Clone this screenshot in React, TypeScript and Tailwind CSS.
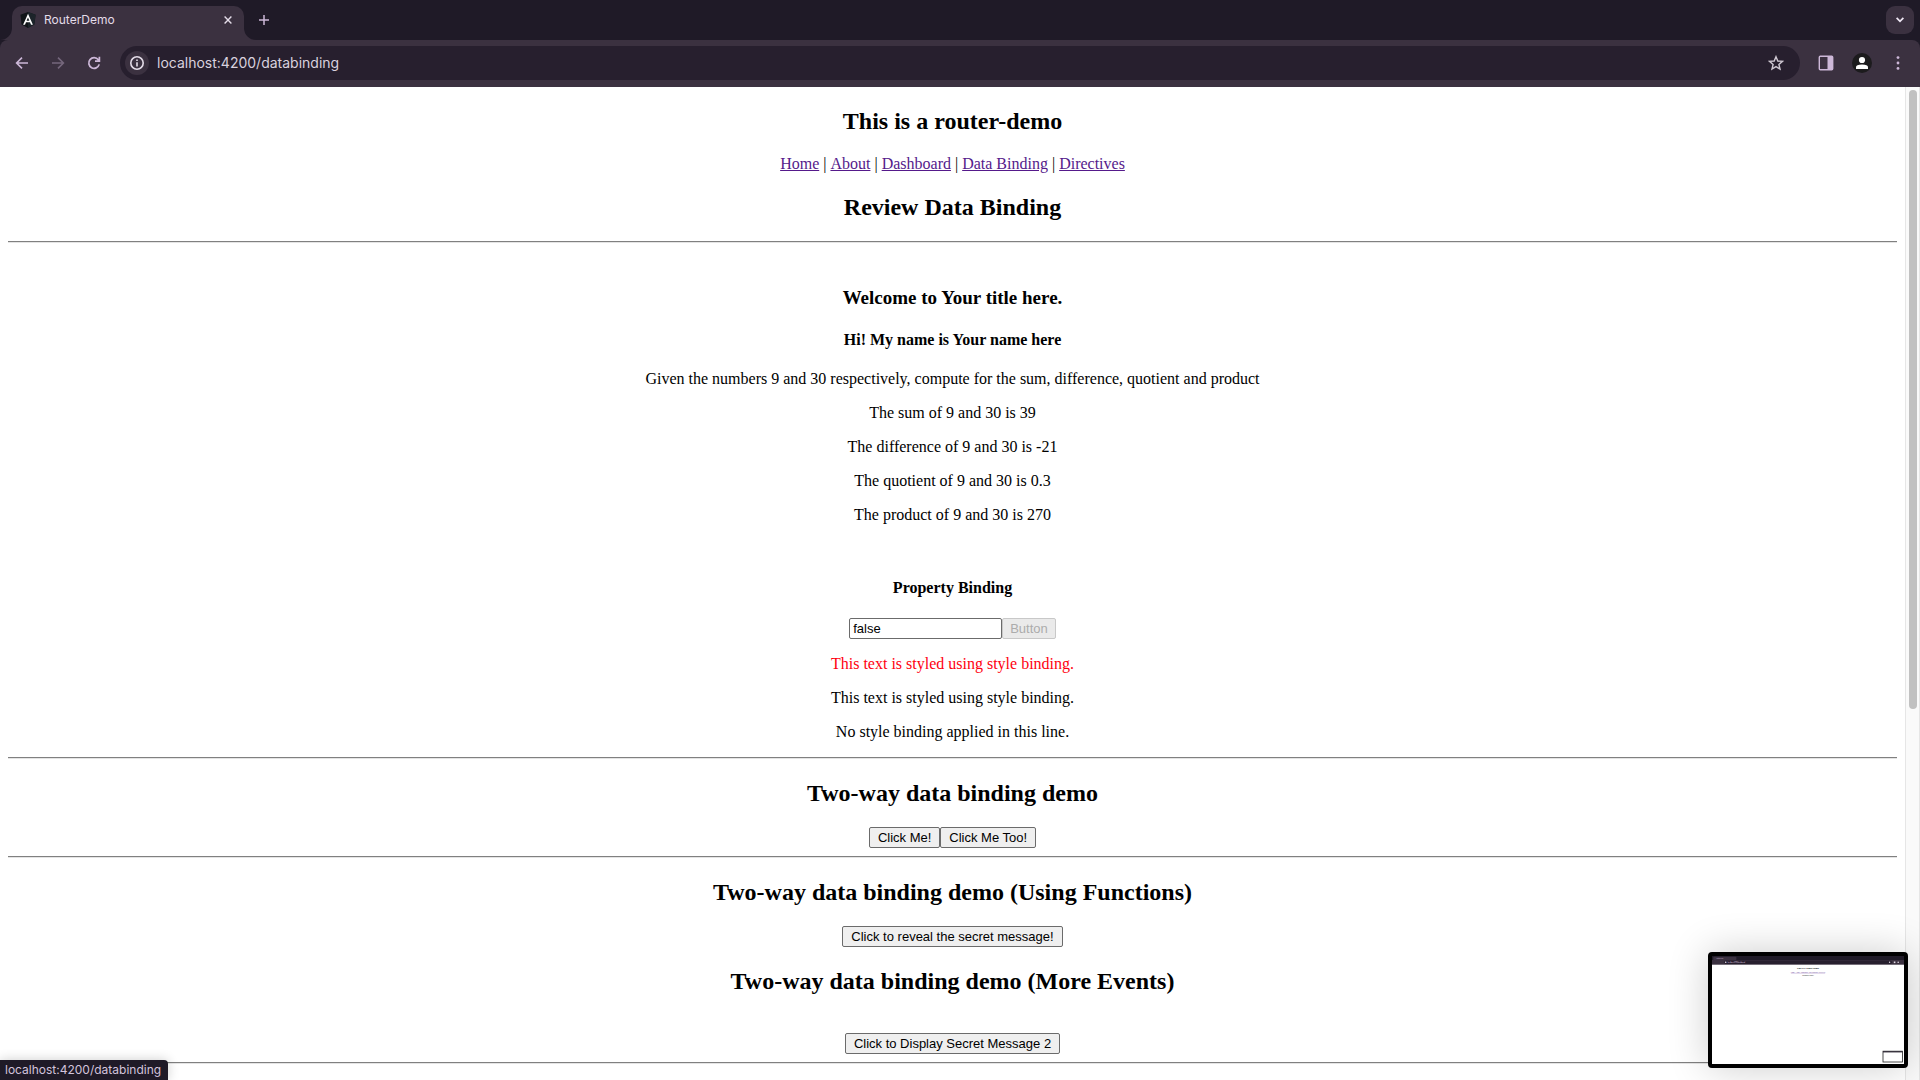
import type { ReactNode } from "react";

const tabFoot = "M0 12 A12 12 0 0 0 12 0 V12 Z";

function AngularMark() {
  return (
    <svg viewBox="0 0 16 16" className="size-4 shrink-0" aria-hidden="true">
      <path d="M8 0 15.6 2.7 14.4 12.6 8 16 1.6 12.6 .4 2.7Z" fill="#101418" />
      <path d="M8 0 15.6 2.7 14.4 12.6 8 16Z" fill="#1c242a" />
      <path d="M8 1.8 3.1 12.8h1.9l1-2.5h4l1 2.5h1.9L8 1.8Zm1.4 7H6.6L8 5.4Z" fill="#fff" />
    </svg>
  );
}

function TabStrip() {
  return (
    <div className="flex h-10 shrink-0 items-end bg-[#1f1a27]">
      <svg viewBox="0 0 12 12" className="size-3 shrink-0" aria-hidden="true">
        <path d={tabFoot} fill="#3b3140" />
      </svg>
      <div className="flex h-[34px] w-[232px] items-center gap-2 rounded-t-[10px] bg-[#3b3140] pr-2 pb-1.5 pl-2">
        <AngularMark />
        <span className="grow text-xs text-[#e4dce8]">RouterDemo</span>
        <button aria-label="Close tab" className="flex size-4 items-center justify-center">
          <svg viewBox="0 0 8 8" className="size-2" fill="none" stroke="#e4dce8" strokeWidth="1.4" aria-hidden="true">
            <path d="M.6 .6 7.4 7.4M7.4 .6 .6 7.4" />
          </svg>
        </button>
      </div>
      <svg viewBox="0 0 12 12" className="size-3 shrink-0 -scale-x-100" aria-hidden="true">
        <path d={tabFoot} fill="#3b3140" />
      </svg>
      <button aria-label="New tab" className="mb-3 flex size-4 items-center justify-center">
        <svg viewBox="0 0 10 10" className="size-2.5" fill="none" stroke="#cdb8d8" strokeWidth="1.5" aria-hidden="true">
          <path d="M5 0V10M0 5H10" />
        </svg>
      </button>
      <button aria-label="Search tabs" className="mr-1.5 mb-1.5 ml-auto flex size-7 items-center justify-center rounded-[9px] bg-[#3b3140]">
        <svg viewBox="0 0 8 6" className="h-1.5 w-2" fill="none" stroke="#f0e8f4" strokeWidth="1.8" aria-hidden="true">
          <path d="M.6 .9 4 4.3 7.4 .9" />
        </svg>
      </button>
    </div>
  );
}

function Toolbar() {
  return (
    <div className="shrink-0 bg-[#1f1a27]">
      <div className="flex h-[47px] items-center rounded-t-lg bg-[#3b3140] pr-3.5 pb-px pl-3.5">
        <div className="flex items-center gap-5">
          <button aria-label="Back" className="size-4">
            <svg viewBox="0 0 16 16" fill="none" stroke="#cdb8d8" strokeWidth="1.6" aria-hidden="true">
              <path d="M14 8H3M8 2.6 2.6 8 8 13.4" />
            </svg>
          </button>
          <button aria-label="Forward" className="size-4">
            <svg viewBox="0 0 16 16" fill="none" stroke="#75677c" strokeWidth="1.6" aria-hidden="true">
              <path d="M2 8H13M8 2.6 13.4 8 8 13.4" />
            </svg>
          </button>
          <button aria-label="Reload" className="size-4">
            <svg viewBox="0 0 16 16" fill="none" stroke="#cdb8d8" strokeWidth="1.7" aria-hidden="true">
              <path d="M13.2 9.4A5.3 5.3 0 1 1 12.3 4.8L13.4 6.2M13.4 1.8V6.2H9" />
            </svg>
          </button>
        </div>
        <div className="ml-[18px] flex h-[34px] grow items-center rounded-full bg-[#271f2e] pr-4 pl-[5px]">
          <button aria-label="View site information" className="flex size-6 items-center justify-center rounded-full bg-[#3b3140]">
            <svg viewBox="0 0 16 16" className="size-4" fill="none" stroke="#e4dce8" strokeWidth="1.6" aria-hidden="true">
              <circle cx="8" cy="8" r="6.2" />
              <path d="M8 7.2V11.4M8 4.4V6" />
            </svg>
          </button>
          <input
            aria-label="Address"
            defaultValue="localhost:4200/databinding"
            className="ml-2 min-w-0 grow bg-transparent text-sm text-[#d9d1de] outline-none"
          />
          <button aria-label="Bookmark this tab" className="size-4">
            <svg viewBox="0 0 16 16" fill="none" stroke="#cfc8d2" strokeWidth="1.4" aria-hidden="true">
              <path d="M8 1.7 9.8 6 14.5 6.4 10.9 9.5 12 14.1 8 11.6 4 14.1 5.1 9.5 1.5 6.4 6.2 6Z" />
            </svg>
          </button>
        </div>
        <button aria-label="Side panel" className="ml-[18px] size-4">
          <svg viewBox="0 0 16 16" aria-hidden="true">
            <rect x="1.3" y="1.3" width="13.4" height="13.4" rx="1" fill="none" stroke="#cdb8d8" strokeWidth="1.4" />
            <path d="M9.5 1H15V15H9.5Z" fill="#cdb8d8" />
          </svg>
        </button>
        <button aria-label="Profile" className="ml-[18px] flex size-5 items-center justify-center rounded-full bg-[#1c1b1d]">
          <svg viewBox="0 0 14 14" className="size-3.5" fill="#fff" aria-hidden="true">
            <circle cx="7" cy="4" r="3.1" />
            <path d="M1 13V11.2Q1 8.4 7 8.4T13 11.2V13Z" />
          </svg>
        </button>
        <button aria-label="Menu" className="ml-[18px] size-4">
          <svg viewBox="0 0 16 16" fill="#cdb8d8" aria-hidden="true">
            <circle cx="8" cy="2.6" r="1.4" />
            <circle cx="8" cy="8" r="1.4" />
            <circle cx="8" cy="13.4" r="1.4" />
          </svg>
        </button>
      </div>
    </div>
  );
}

function H2({ children }: { children: ReactNode }) {
  return <h2 className="my-5 text-2xl leading-7 font-bold">{children}</h2>;
}

function Rule() {
  return <hr className="h-0.5 border-x-0 border-t border-b border-t-[#808080] border-b-[#e4e4e4]" />;
}

function PushButton({ children, disabled }: { children: ReactNode; disabled?: boolean }) {
  return (
    <button
      disabled={disabled}
      className="h-[21px] rounded-[2px] border border-[#6b6b6b] bg-[#efefef] px-2 font-[Liberation_Sans,Arial,sans-serif] text-[13px] leading-4 text-black disabled:border-[#c8c8c8] disabled:bg-[#eaeaea] disabled:px-[7px] disabled:text-[#acacac]"
    >
      {children}
    </button>
  );
}

const links = ["Home", "About", "Dashboard", "Data Binding", "Directives"];

const results = [
  "Given the numbers 9 and 30 respectively, compute for the sum, difference, quotient and product",
  "The sum of 9 and 30 is 39",
  "The difference of 9 and 30 is -21",
  "The quotient of 9 and 30 is 0.3",
  "The product of 9 and 30 is 270",
];

function Page() {
  return (
    <main className="flow-root min-w-0 grow overflow-hidden px-2 text-center font-[Liberation_Serif,Times_New_Roman,serif] text-base leading-[18px] text-black">
      <H2>This is a router-demo</H2>
      <nav className="flex justify-center gap-1">
        {links.map((label, i) => (
          <span key={label} className="flex gap-1">
            {i > 0 && <span>|</span>}
            <a href="#" className="text-[#551a8b] underline">
              {label}
            </a>
          </span>
        ))}
      </nav>
      <H2>Review Data Binding</H2>
      <Rule />
      <h3 className="mt-11 text-[19px] leading-[22px] font-bold">Welcome to Your title here.</h3>
      <h4 className="mt-[22px] mb-[21px] font-bold">Hi! My name is Your name here</h4>
      <div className="flex flex-col gap-4">
        {results.map((line) => (
          <p key={line}>{line}</p>
        ))}
      </div>
      <h4 className="mt-[55px] mb-[21px] font-bold">Property Binding</h4>
      <div className="flex justify-center">
        <input
          aria-label="Property value"
          defaultValue="false"
          className="h-[21px] w-[153px] rounded-[2px] border border-[#6b6b6b] bg-white px-[3px] font-[Liberation_Sans,Arial,sans-serif] text-[13px] leading-4"
        />
        <PushButton disabled>Button</PushButton>
      </div>
      <div className="my-4 flex flex-col gap-4">
        <p className="text-[#ff0010]">This text is styled using style binding.</p>
        <p>This text is styled using style binding.</p>
        <p>No style binding applied in this line.</p>
      </div>
      <Rule />
      <H2>Two-way data binding demo</H2>
      <div className="mb-2 flex justify-center">
        <PushButton>Click Me!</PushButton>
        <PushButton>Click Me Too!</PushButton>
      </div>
      <Rule />
      <H2>Two-way data binding demo (Using Functions)</H2>
      <div className="flex justify-center">
        <PushButton>Click to reveal the secret message!</PushButton>
      </div>
      <H2>Two-way data binding demo (More Events)</H2>
      <div className="mt-[38px] mb-2 flex justify-center">
        <PushButton>Click to Display Secret Message 2</PushButton>
      </div>
      <Rule />
    </main>
  );
}

function Preview() {
  return (
    <div className="absolute right-3 bottom-3 w-[200px] overflow-hidden rounded-[4px] border-4 border-black bg-white shadow-[0_0_40px_rgba(0,0,0,0.2)]">
      <svg viewBox="0 0 1920 1080" className="block w-full" aria-hidden="true">
        <rect width="1920" height="40" fill="#1f1a27" />
        <rect y="40" width="1920" height="47" fill="#3b3140" />
        <rect x="12" y="8" width="232" height="34" rx="10" fill="#3b3140" />
        <rect x="120" y="46" width="1680" height="34" rx="17" fill="#271f2e" />
        <g fill="#e4dce8" fontFamily="Inter, sans-serif">
          <text x="44" y="25" fontSize="12">RouterDemo</text>
          <text x="157" y="68" fontSize="14">localhost:4200/dashboard</text>
          <circle cx="137" cy="63" r="8" />
          <circle cx="1776" cy="63" r="7" />
          <rect x="1818" y="55" width="16" height="16" />
          <circle cx="1862" cy="63" r="8" />
        </g>
        <g textAnchor="middle" fontFamily="Liberation Serif, serif">
          <text x="960" y="129" fontSize="24" fontWeight="bold">This is a router-demo</text>
          <text x="960" y="168" fontSize="16" fill="#551a8b" textDecoration="underline">
            Home | About | Dashboard | Data Binding | Directives
          </text>
          <text x="960" y="202" fontSize="16">dashboard works!</text>
        </g>
        <rect x="1710" y="952" width="194" height="108" fill="#fff" stroke="#222" strokeWidth="8" />
        <rect x="1710" y="952" width="194" height="12" fill="#2a2331" />
      </svg>
    </div>
  );
}

export default function App() {
  return (
    <div className="relative flex h-screen flex-col overflow-hidden bg-white font-[Inter,sans-serif]">
      <TabStrip />
      <Toolbar />
      <div className="flex min-h-0 grow">
        <Page />
        <div className="w-[15px] shrink-0 border-x border-x-[#e6e6e6] bg-[#fafafa] px-[3px] pt-[3px]">
          <div className="h-5/8 w-2 rounded-full bg-[#c1c1c1]" />
        </div>
      </div>
      <div className="absolute bottom-0 left-0 h-5 rounded-tr-[4px] bg-[#1f1a27] pr-[7px] pl-[5px] text-xs leading-5 text-[#d3c3dc] shadow-[0_0_12px_rgba(0,0,0,0.2)]">
        localhost:4200/databinding
      </div>
      <Preview />
    </div>
  );
}
